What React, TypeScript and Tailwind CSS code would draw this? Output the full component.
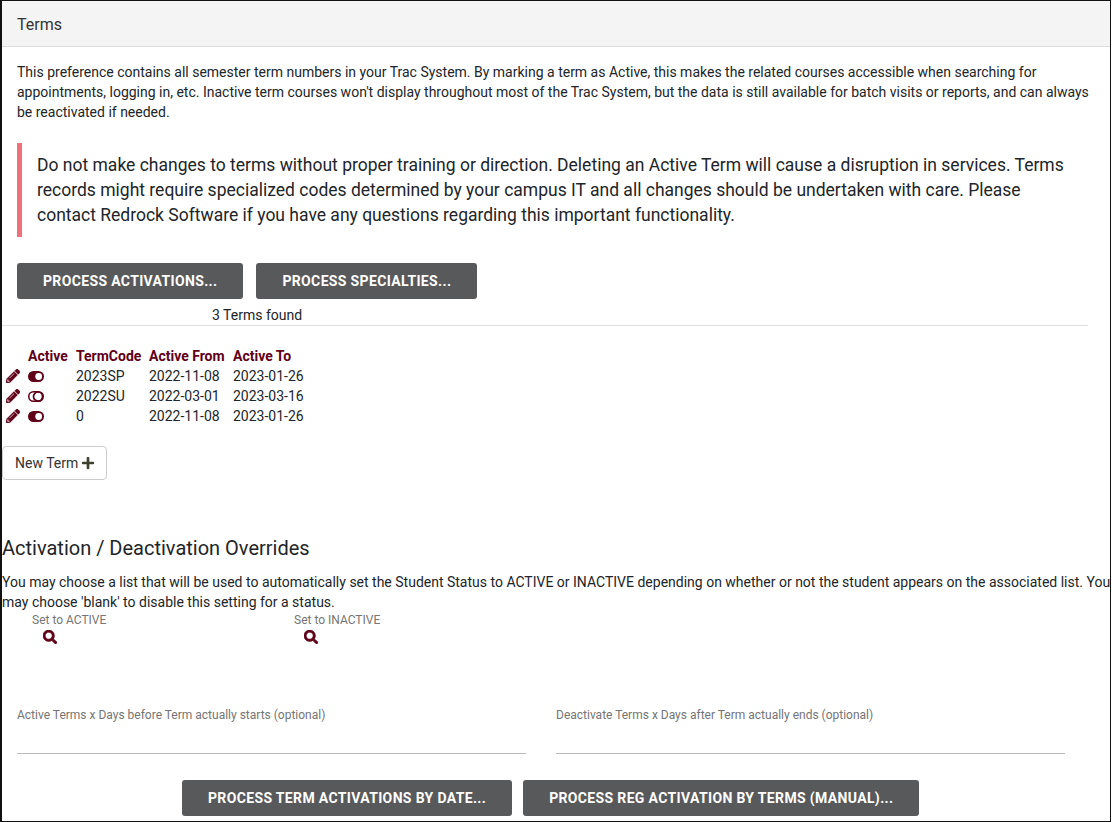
import React from 'react';
import { FaPencilAlt, FaPlus, FaSearch } from 'react-icons/fa';

const maroon = 'text-[#5f0018]';

const terms = [
  { code: '2023SP', from: '2022-11-08', to: '2023-01-26', on: true },
  { code: '2022SU', from: '2022-03-01', to: '2023-03-16', on: false },
  { code: '0', from: '2022-11-08', to: '2023-01-26', on: true },
];

function Toggle({ on }: { on: boolean }) {
  return (
    <svg width="16" height="11" viewBox="0 0 16 11" className="block">
      <rect x="0.75" y="0.75" width="14.5" height="9.5" rx="4.75" fill={on ? '#5f0018' : '#fff'} stroke="#5f0018" strokeWidth="1.5" />
      <circle cx={on ? 10.7 : 10} cy="5.5" r={on ? 3.4 : 4.5} fill={on ? '#fff' : 'none'} stroke={on ? 'none' : '#5f0018'} strokeWidth="1.7" />
    </svg>
  );
}

function DarkButton({ children }: { children: React.ReactNode }) {
  return (
    <button className="h-9 px-[26px] rounded-[3px] bg-[#58595b] text-white text-sm font-bold tracking-[0.35px] whitespace-nowrap">
      {children}
    </button>
  );
}

export default function App() {
  return (
    <div className="w-[1111px] h-[822px] overflow-hidden bg-white border-l-2 border-r border-t border-b border-[#111] text-[#212529] text-sm font-['Roboto',sans-serif]">
      <div className="h-[46px] bg-[#f4f4f4] border-b border-[#ddd] flex items-center pl-[15px] pt-[2px] text-base text-[#333]">Terms</div>

      <p className="pl-[15px] pr-[20px] pt-[15px] leading-5">
        This preference contains all semester term numbers in your Trac System. By marking a term as Active, this makes the related courses accessible when searching for appointments, logging in, etc. Inactive term courses won't display throughout most of the Trac System, but the data is still available for batch visits or reports, and can always be reactivated if needed.
      </p>

      <div className="ml-[15px] mr-[20px] mt-[21px] border-l-[5px] border-[#ef7078] pl-[15px] pr-[10px] pt-[10px] pb-[9px] text-[17.5px] leading-[25px]">
        Do not make changes to terms without proper training or direction. Deleting an Active Term will cause a disruption in services. Terms records might require specialized codes determined by your campus IT and all changes should be undertaken with care. Please contact Redrock Software if you have any questions regarding this important functionality.
      </div>

      <div className="flex gap-[13px] pl-[15px] mt-[26px]">
        <DarkButton>PROCESS ACTIVATIONS...</DarkButton>
        <DarkButton>PROCESS SPECIALTIES...</DarkButton>
      </div>

      <div className="w-[1086px] h-[27px] border-b border-[#e0e0e0] pl-[210px] pt-[6px] leading-5">3 Terms found</div>

      <table className="ml-[2px] mt-[20px] border-collapse">
        <thead>
          <tr className={`${maroon} font-bold text-left leading-5`}>
            <th className="w-[24px] p-0"></th>
            <th className="w-[48px] p-0">Active</th>
            <th className="w-[73px] p-0">TermCode</th>
            <th className="w-[84px] p-0">Active From</th>
            <th className="p-0 pr-[2px]">Active To</th>
          </tr>
        </thead>
        <tbody>
          {terms.map((t, i) => (
            <tr key={i} className="h-5 leading-5">
              <td className="p-0 pl-[2px]"><FaPencilAlt className={`${maroon} text-[14px]`} stroke="currentColor" strokeWidth={15} /></td>
              <td className="p-0"><Toggle on={t.on} /></td>
              <td className="p-0">{t.code}</td>
              <td className="p-0">{t.from}</td>
              <td className="p-0">{t.to}</td>
            </tr>
          ))}
        </tbody>
      </table>

      <button className="mt-[20px] h-[34px] w-[105px] border border-[#ccc] rounded-[4px] bg-white text-[#333] flex items-center pl-[12px] gap-[3px]">
        New Term <FaPlus className="text-[14px] text-[#3f3f30]" />
      </button>

      <h2 className="text-xl leading-6 text-[#212529] mt-[56px]">Activation / Deactivation Overrides</h2>
      <p className="leading-5 mt-[12px] w-[1110px]">
        You may choose a list that will be used to automatically set the Student Status to ACTIVE or INACTIVE depending on whether or not the student appears on the associated list. You may choose 'blank' to disable this setting for a status.
      </p>

      <div className="flex text-xs text-[#757575] leading-4">
        <div className="w-[292px] pl-[30px]">
          <div>Set to ACTIVE</div>
          <FaSearch className={`${maroon} text-[14px] ml-[11px] mt-[2px]`} stroke="currentColor" strokeWidth={25} />
        </div>
        <div>
          <div>Set to INACTIVE</div>
          <FaSearch className={`${maroon} text-[14px] ml-[10px] mt-[2px]`} stroke="currentColor" strokeWidth={25} />
        </div>
      </div>

      <div className="flex gap-[30px] pl-[15px] mt-[63px] text-xs text-[#757575]">
        <div className="w-[509px] h-[47px] border-b border-[#bbb] leading-4">Active Terms x Days before Term actually starts (optional)</div>
        <div className="w-[509px] h-[47px] border-b border-[#bbb] leading-4">Deactivate Terms x Days after Term actually ends (optional)</div>
      </div>

      <div className="flex gap-[11px] pl-[180px] mt-[26px]">
        <DarkButton>PROCESS TERM ACTIVATIONS BY DATE...</DarkButton>
        <DarkButton>PROCESS REG ACTIVATION BY TERMS (MANUAL)...</DarkButton>
      </div>
    </div>
  );
}
